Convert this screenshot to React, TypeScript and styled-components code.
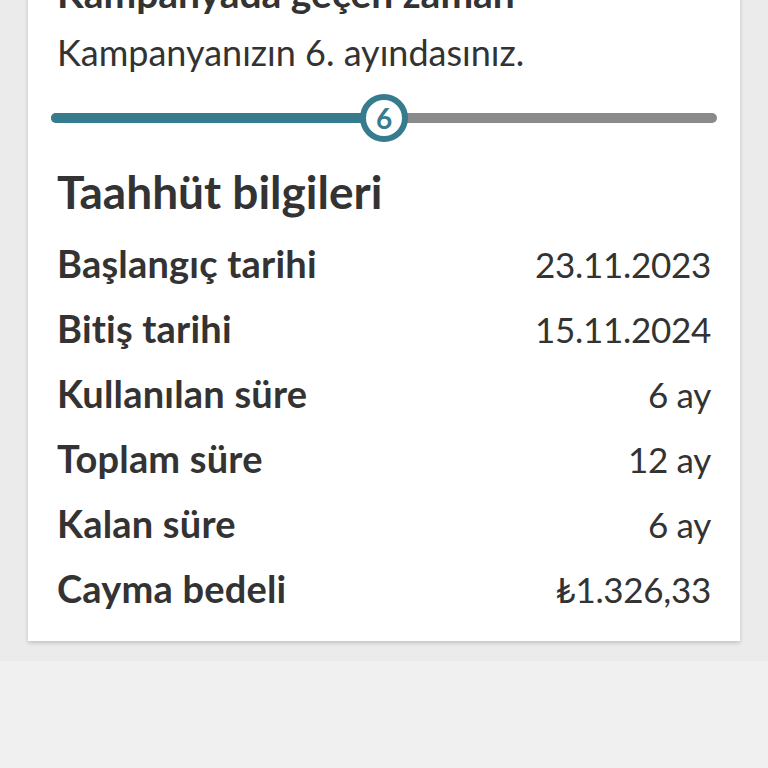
import React from 'react';
import styled, { createGlobalStyle } from 'styled-components';

const GlobalStyle = createGlobalStyle`
    body {
        margin: 0;
        background: #f0f0f0;
        font-family: Lato, "Open Sans", sans-serif;
        color: #333333;
    }
`

const Section = styled.div`
    background: #ebebeb;
    padding: 0 28px 20px;
`

const Card = styled.div`
    background: #ffffff;
    margin-top: -58px;
    padding: 24px 29px 20px;
    box-shadow: 0 2px 4px rgba(0, 0, 0, 0.18);
`

const Title = styled.h2`
    margin: 0;
    font-size: 39px;
    line-height: 54px;
    font-weight: 700;
`

const Subtitle = styled.p`
    margin: 10px 0 0;
    font-size: 36px;
    line-height: 44px;
    font-weight: 400;
`

const Slider = styled.div`
    position: relative;
    height: 46px;
    margin: 21px -6px 0;
    display: flex;
    align-items: center;
`

const Track = styled.div`
    flex: 1;
    height: 10px;
    border-radius: 5px;
    background: #8a8a8a;
    overflow: hidden;
`

const Fill = styled.div`
    height: 100%;
    background: #367b8e;
`

const Thumb = styled.div`
    position: absolute;
    top: -1px;
    width: 48px;
    height: 48px;
    box-sizing: border-box;
    margin-left: -24px;
    border-radius: 50%;
    border: 6px solid #367b8e;
    background: #ffffff;
    display: flex;
    align-items: center;
    justify-content: center;
    color: #367b8e;
    font-size: 28px;
    font-weight: 700;
`

const Heading = styled.h3`
    margin: 24px 0 12px;
    font-size: 46px;
    line-height: 54px;
    font-weight: 700;
`

const Row = styled.div`
    display: flex;
    justify-content: space-between;
    align-items: baseline;
    height: 65px;
    line-height: 65px;
`

const Label = styled.span`
    font-size: 38px;
    font-weight: 700;
    letter-spacing: 0.2px;
`

const Value = styled.span`
    font-size: 35px;
    font-weight: 400;
    letter-spacing: -0.3px;
`

const rows = [
    { label: 'Başlangıç tarihi', value: '23.11.2023' },
    { label: 'Bitiş tarihi', value: '15.11.2024' },
    { label: 'Kullanılan süre', value: '6 ay' },
    { label: 'Toplam süre', value: '12 ay' },
    { label: 'Kalan süre', value: '6 ay' },
    { label: 'Cayma bedeli', value: '₺1.326,33' }
]

const used = 6;
const total = 12;

function App() {
    const pct = (used / total) * 100;
    return (
        <>
            <GlobalStyle />
            <Section>
                <Card>
                    <Title>Kampanyada geçen zaman</Title>
                    <Subtitle>Kampanyanızın {used}. ayındasınız.</Subtitle>
                    <Slider>
                        <Track>
                            <Fill style={{ width: `${pct}%` }} />
                        </Track>
                        <Thumb style={{ left: `${pct}%` }}>{used}</Thumb>
                    </Slider>
                    <Heading>Taahhüt bilgileri</Heading>
                    {rows.map(r => (
                        <Row key={r.label}>
                            <Label>{r.label}</Label>
                            <Value>{r.value}</Value>
                        </Row>
                    ))}
                </Card>
            </Section>
        </>
    )
}

export default App;
